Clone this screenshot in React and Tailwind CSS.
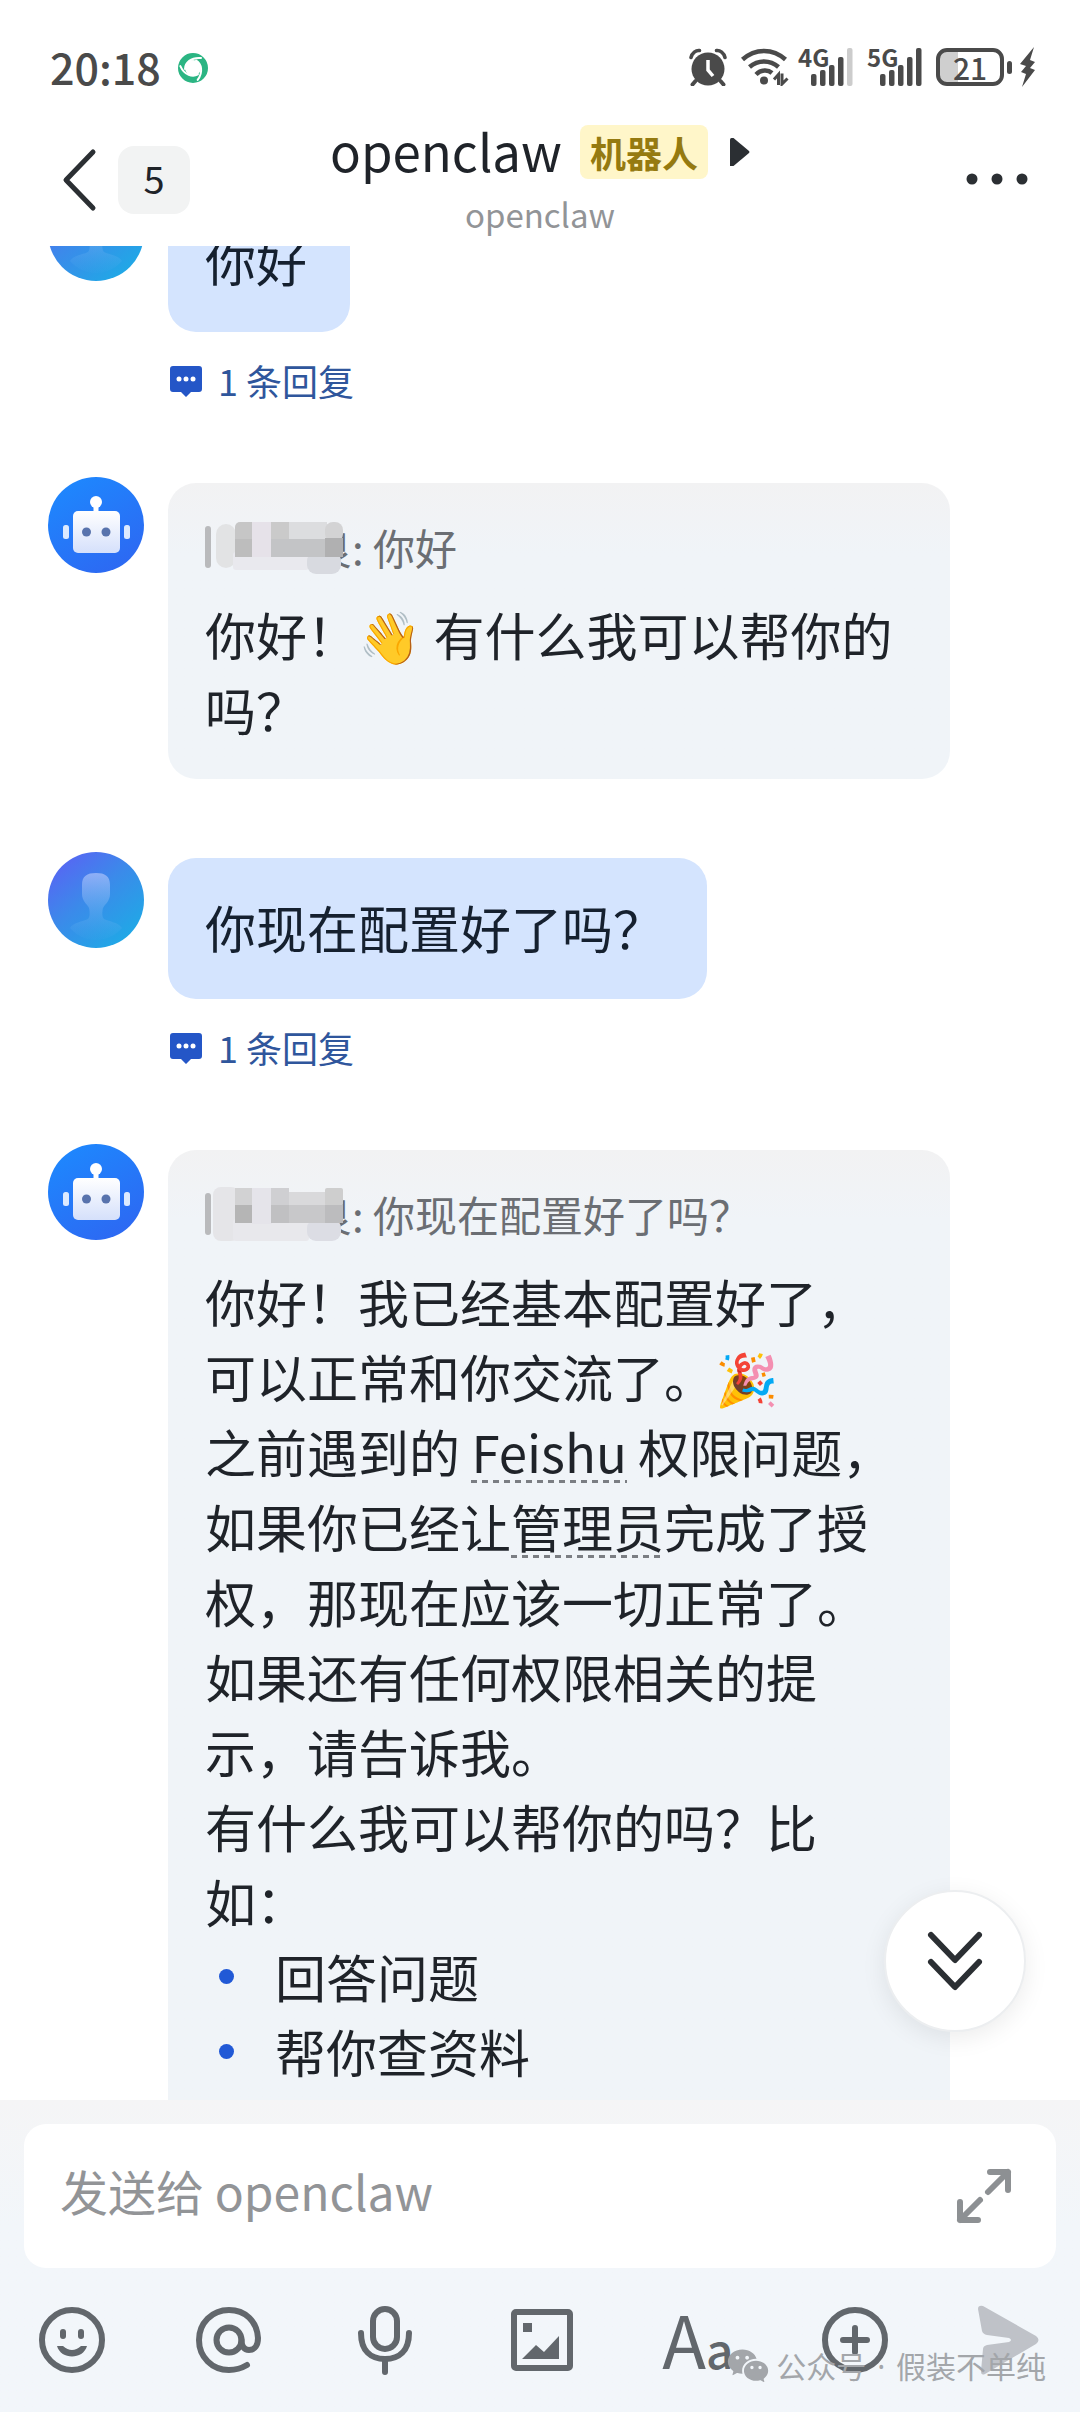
import { RiWechatFill } from "react-icons/ri";

function StatusBar() {
  return (
    <div className="flex h-[92px] items-end justify-between pr-[44px] pl-[50px] text-[#4a4a4a]">
      <div className="flex h-[50px] items-start gap-4">
        <time className="text-[43px] leading-[48px] font-medium">20:18</time>
        <svg viewBox="0 0 32 32" className="mt-[10px] size-8" fill="none" aria-hidden="true">
          <circle cx="16" cy="16" r="11.500" stroke="#2bb583" strokeWidth="7" />
          <g stroke="#fff" strokeWidth="2" strokeLinecap="round">
            <path id="cut" d="M8 17C8 11 14 5 24 6" />
            <path transform="rotate(120 16 16)" d="M8 17C8 11 14 5 24 6" />
            <path transform="rotate(240 16 16)" d="M8 17C8 11 14 5 24 6" />
          </g>
        </svg>
      </div>
      <div className="flex h-[50px] items-center">
        <svg viewBox="0 0 38 38" className="mr-[14px] size-[38px]" fill="none" aria-hidden="true">
          <circle cx="19" cy="21" r="16.500" fill="#4a4a4a" />
          <path d="M2 9.500C3 5 7 2 10.500 2.500M36 9.500C35 5 31 2 27.500 2.500" stroke="#4a4a4a" strokeWidth="3.500" strokeLinecap="round" />
          <path d="M6.500 33L3.500 36.500M31.500 33L34.500 36.500" stroke="#4a4a4a" strokeWidth="4" strokeLinecap="round" />
          <path d="M19 12V22L24 28" stroke="#fff" strokeWidth="3.500" />
        </svg>
        <svg viewBox="0 0 48 38" className="mr-[9px] h-[38px] w-12" fill="none" stroke="#4a4a4a" aria-hidden="true">
          <path d="M1.500 11.500C14 0 32 0 44.500 11.500" strokeWidth="4.500" />
          <path d="M8.500 19C17 11.500 29 11.500 37.500 19" strokeWidth="4.500" />
          <path d="M15 26.500C20 21.500 27 21.500 31 25" strokeWidth="4.500" />
          <circle cx="23" cy="32.500" r="4" fill="#4a4a4a" stroke="none" />
          <path d="M33 31.500L37.500 26.500V37M41 25.500V36L46.500 30.500" strokeWidth="3" />
        </svg>
        <Signal label="4G" full={false} />
        <Signal label="5G" full />
        <div className="flex h-[38px] w-[68px] items-center justify-center rounded-[11px] border-4 border-[#4a4a4a] bg-linear-to-r from-[#cfcfcf] from-30% to-white to-30% text-[30px] leading-[30px] font-medium">
          21
        </div>
        <span className="mr-2 ml-[3px] h-[13px] w-[5px] rounded-sm bg-[#4a4a4a]" />
        <svg viewBox="0 0 16 40" className="h-10 w-4" fill="#4a4a4a" aria-hidden="true">
          <path d="M14 0L0 17L6 19L1 25L6 27L2 40L15 23L10 21L15 15L10 13Z" />
        </svg>
      </div>
    </div>
  );
}

function Signal({ label, full }) {
  return (
    <div className="relative mr-[13px] h-[38px] w-14">
      <span className="absolute -top-px left-0 text-[24px] leading-[20px] font-bold">{label}</span>
      <svg viewBox="0 0 56 38" className="size-full" fill="#4a4a4a" aria-hidden="true">
        <rect x="13" y="26" width="5.500" height="12" rx="2" />
        <rect x="22" y="22" width="5.500" height="16" rx="2" />
        <rect x="31" y="17" width="5.500" height="21" rx="2" />
        <rect x="40" y="9" width="5.500" height="29" rx="2" />
        <rect x="49" y="0" width="5.500" height="38" rx="2" fill={full ? "#4a4a4a" : "#cccccc"} />
      </svg>
    </div>
  );
}

function Header() {
  return (
    <header className="grid h-[154px] grid-cols-[1fr_auto_1fr] items-start text-[#1f2329]">
      <div className="flex items-center pt-[54px] pl-[60px]">
        <button aria-label="返回" className="mr-[20px]">
          <svg viewBox="0 0 38 68" className="h-[68px] w-[38px]" fill="none" stroke="#2b2f33" strokeWidth="5" strokeLinecap="round" strokeLinejoin="round">
            <path d="M33 6L6 34L33 62" />
          </svg>
        </button>
        <span className="flex h-[68px] w-[72px] items-center justify-center rounded-2xl bg-[#f2f3f3] pb-1 text-[38px] leading-[64px]">5</span>
      </div>
      <div className="grid justify-items-center pt-6">
        <div className="flex h-[72px] items-center">
          <h1 className="pb-1 text-[51px] leading-[64px]">openclaw</h1>
          <span className="ml-[18px] rounded-lg bg-[#fff6c9] px-[10px] text-[36px] leading-[54px] font-bold text-[#957a10]">机器人</span>
          <svg viewBox="0 0 20 28" className="ml-[22px] h-7 w-5" fill="#2b2f33" aria-hidden="true">
            <path d="M0 1.500Q0 0 1.500 0H3.500L19 13Q20 14 19 15L3.500 28H0Z" />
          </svg>
        </div>
        <p className="pt-1 text-[33px] leading-[44px] text-[#929497]">openclaw</p>
      </div>
      <div className="flex justify-end pt-[76px] pr-[52px]">
        <button aria-label="更多">
          <svg viewBox="0 0 62 22" className="h-[22px] w-[62px]" fill="#2b2f33">
            <circle cx="6" cy="11" r="5.500" />
            <circle cx="31" cy="11" r="5.500" />
            <circle cx="56" cy="11" r="5.500" />
          </svg>
        </button>
      </div>
    </header>
  );
}

function UserAvatar() {
  return (
    <svg viewBox="0 0 96 96" className="size-24 shrink-0" role="img" aria-label="用户">
      <defs>
        <linearGradient id="userBg" x1="0.1" y1="0.1" x2="0.8" y2="0.95">
          <stop offset="0" stopColor="#5766f3" />
          <stop offset="0.450" stopColor="#3b8aea" />
          <stop offset="1" stopColor="#1fa9e6" />
        </linearGradient>
        <linearGradient id="userFg" x1="0" y1="0" x2="0" y2="1">
          <stop offset="0" stopColor="#a9c0fa" stopOpacity="0.750" />
          <stop offset="1" stopColor="#58b0ee" stopOpacity="0.050" />
        </linearGradient>
      </defs>
      <circle cx="48" cy="48" r="48" fill="url(#userBg)" />
      <path d="M48 21C57 21 62 24 62 33V42C62 49 57 52 55 56C54 60 54 65 56 67C62 70 70 70 74 76C67 84 58 88 48 88C38 88 29 84 22 76C26 70 34 70 40 67C42 65 42 60 41 56C39 52 34 49 34 42V33C34 24 39 21 48 21Z" fill="url(#userFg)" />
    </svg>
  );
}

function BotAvatar() {
  return (
    <svg viewBox="0 0 96 96" className="size-24 shrink-0" role="img" aria-label="openclaw">
      <defs>
        <linearGradient id="botBg" x1="0" y1="0" x2="0.6" y2="1">
          <stop offset="0" stopColor="#1c8bff" />
          <stop offset="1" stopColor="#2c6af3" />
        </linearGradient>
        <linearGradient id="botFg" x1="0" y1="0" x2="0" y2="1">
          <stop offset="0" stopColor="#ffffff" />
          <stop offset="1" stopColor="#d5e0fb" />
        </linearGradient>
      </defs>
      <circle cx="48" cy="48" r="48" fill="url(#botBg)" />
      <circle cx="48" cy="25" r="6" fill="#fff" />
      <rect x="45.500" y="26" width="5" height="10" fill="#fff" />
      <rect x="25" y="34" width="47" height="42" rx="5" fill="url(#botFg)" />
      <rect x="15" y="48" width="6" height="14" rx="2.500" fill="#dceaff" />
      <rect x="76" y="48" width="6" height="14" rx="2.500" fill="#dceaff" />
      <circle cx="38.500" cy="55" r="4.500" fill="#5873ad" />
      <circle cx="58" cy="55" r="4.500" fill="#5873ad" />
    </svg>
  );
}

const mosaicA = [
  [3, 6, 20, 44, "#e2e3e4", 10], [20, 34, 76, 18, "#e9e9ee", 3], [94, 34, 34, 22, "#d8dae0", 9],
  [22, 4, 30, 34, "#c6c6c6", 5], [39, 4, 20, 35, "#e6e2e9", 0], [58, 4, 18, 18, "#cacaca", 0],
  [76, 4, 38, 18, "#dcdddf", 0], [112, 4, 18, 20, "#d3d3d4", 8], [22, 21, 17, 18, "#bdbdbd", 0],
  [58, 21, 54, 18, "#c3c4c6", 0], [112, 20, 18, 19, "#b0b0b1", 0],
];
const mosaicB = [
  [0, 2, 26, 54, "#e5e5e8", 8], [20, 34, 76, 22, "#e8e8ec", 3], [94, 34, 34, 22, "#dcdde4", 9],
  [22, 3, 17, 18, "#d2d2d3", 0], [39, 3, 20, 36, "#e5e4ea", 0], [58, 3, 18, 18, "#cfcfd2", 0],
  [76, 7, 38, 15, "#d9d9db", 0], [112, 3, 18, 18, "#cecece", 2], [22, 20, 17, 18, "#b5b5b5", 0],
  [58, 20, 18, 18, "#c0c0c2", 0], [76, 20, 36, 18, "#c8c8ca", 0], [112, 20, 18, 18, "#bcbcbe", 0],
];

function Quote({ children, blocks }) {
  return (
    <blockquote className="relative flex h-16 items-center text-[42px] leading-[64px] text-[#6b6e73]">
      <span className="mr-[99px] h-[42px] w-[6px] rounded-sm bg-[#b9babc]" />
      <span>良: {children}</span>
      <svg viewBox="0 0 130 60" className="absolute top-[3px] left-2 h-[60px] w-[130px]" aria-hidden="true">
        {blocks.map(([x, y, w, h, fill, r], i) => (
          <rect key={i} x={x} y={y} width={w} height={h} rx={r} fill={fill} />
        ))}
      </svg>
    </blockquote>
  );
}

function UserMessage({ children }) {
  return (
    <article className="flex items-start gap-6 pl-12">
      <UserAvatar />
      <div className="pt-[6px]">
        <p className="w-fit rounded-[28px] bg-[#d4e4fe] pt-8 pb-[34px] pr-[43px] pl-[37px] text-[#15202f]">{children}</p>
        <button className="mt-6 flex h-12 items-center gap-[15px] pl-px text-[36px] leading-[48px] text-[#2f569c]">
          <svg viewBox="0 0 34 32" className="mt-1 h-8 w-[34px]" aria-hidden="true">
            <path d="M4 0H30Q33 0 33 3V23Q33 26 30 26H22L17 31L12 26H4Q1 26 1 23V3Q1 0 4 0Z" fill="#2456c7" />
            <g fill="#fff">
              <circle cx="10" cy="13" r="2.500" />
              <circle cx="17" cy="13" r="2.500" />
              <circle cx="24" cy="13" r="2.500" />
            </g>
          </svg>
          1 条回复
        </button>
      </div>
    </article>
  );
}

function BotMessage({ children }) {
  return (
    <article className="flex items-start gap-6 pr-[130px] pl-12">
      <BotAvatar />
      <div className="mt-[6px] flex-1 rounded-[28px] bg-linear-to-b from-[#f2f2f3] to-[#f0f4f8] to-[70px] pt-8 pr-[43px] pb-8 pl-[37px]">
        {children}
      </div>
    </article>
  );
}

function Term({ children }) {
  return (
    <a
      href="#term"
      className="bg-[repeating-linear-gradient(90deg,#7b7e83_0_6px,transparent_6px_11px)] bg-[length:100%_3px] bg-[position:0_66px] bg-no-repeat"
    >
      {children}
    </a>
  );
}

function Composer() {
  const tool = "flex h-[70px] w-[66px] items-center justify-center";
  return (
    <footer className="relative bg-linear-to-b from-[#f5f5f6] to-[#f2f6fa] to-40% px-6 pt-6 pb-[37px]">
      <div className="flex h-36 items-center rounded-[22px] bg-white pr-[42px] pl-9">
        <input
          aria-label="发送给 openclaw"
          placeholder="发送给 openclaw"
          className="h-[84px] min-w-0 flex-1 bg-transparent pb-3 text-[48px] outline-none placeholder:text-[#929497]"
        />
        <button aria-label="展开">
          <svg viewBox="0 0 60 60" className="size-[60px]" fill="none" stroke="#8d9093" strokeWidth="6" strokeLinecap="round" strokeLinejoin="round">
            <path d="M36 6H54V24M54 6L34 26M6 36V54H24M6 54L26 34" />
          </svg>
        </button>
      </div>
      <div className="mt-[37px] flex justify-between pr-3 pl-[15px] text-[#62676c]">
        <button aria-label="表情" className={tool}>
          <svg viewBox="0 0 66 68" className="h-[68px] w-[66px]" fill="none" stroke="currentColor" strokeWidth="6">
            <circle cx="33" cy="34" r="30" />
            <rect x="21" y="23" width="6" height="10" rx="3" fill="currentColor" stroke="none" />
            <rect x="39" y="23" width="6" height="10" rx="3" fill="currentColor" stroke="none" />
            <path d="M18 40H24Q33 48 42 40H48C44 54 22 54 18 40Z" fill="currentColor" stroke="none" />
          </svg>
        </button>
        <button aria-label="提及" className={tool}>
          <svg viewBox="0 0 66 68" className="h-[68px] w-[66px]" fill="none" stroke="currentColor" strokeWidth="6" strokeLinecap="round">
            <circle cx="33" cy="34" r="12.500" />
            <path d="M45.500 34C45.500 40 48 44 53 44C59 44 62 39 62 32C61 15 49 4 33 4C16 4 3 17 3 34C3 51 16 64 33 64C40 64 46 62 51 59" />
          </svg>
        </button>
        <button aria-label="语音" className={tool}>
          <svg viewBox="0 0 66 70" className="h-[70px] w-[66px]" fill="none" stroke="currentColor" strokeWidth="6" strokeLinecap="round">
            <rect x="21" y="4" width="24" height="40" rx="12" />
            <path d="M9 28C9 46 19 54 33 54C47 54 57 46 57 28M33 54V67" />
          </svg>
        </button>
        <button aria-label="图片" className={tool}>
          <svg viewBox="0 0 66 68" className="h-[68px] w-[66px]" fill="none" stroke="currentColor" strokeWidth="6">
            <rect x="5" y="6" width="56" height="56" rx="2" />
            <rect x="14" y="17" width="9" height="9" fill="currentColor" stroke="none" />
            <path d="M13 53L27 39L35 46L50 30V53Z" fill="currentColor" stroke="none" />
          </svg>
        </button>
        <button aria-label="文字格式" className="flex h-[70px] w-[66px] items-baseline justify-center leading-[66px]">
          <span className="text-[72px]">A</span>
          <span className="text-[48px] font-medium">a</span>
        </button>
        <button aria-label="更多功能" className={tool}>
          <svg viewBox="0 0 66 68" className="h-[68px] w-[66px]" fill="none" stroke="currentColor" strokeWidth="6" strokeLinecap="round">
            <circle cx="33" cy="34" r="30" />
            <path d="M33 22V46M21 34H45" />
          </svg>
        </button>
        <button aria-label="发送" className="flex h-[70px] w-[66px] items-center">
          <svg viewBox="3 0 63 70" className="h-[70px] w-[63px]" fill="#bfc2c8">
            <path d="M3 4Q3 0 8 1L61 31Q66 35 61 39L10 69Q6 71 6 66L8 44Q8 41 12 40L34 37Q38 35 34 33L12 30Q8 29 7 26Z" />
          </svg>
        </button>
      </div>
      <div className="pointer-events-none absolute right-[34px] bottom-[23px] flex items-center gap-[6px] text-[30px] leading-[44px] text-[#a3a6aa]">
        <RiWechatFill className="size-[44px]" aria-hidden="true" />
        <span>
          公众号<span className="px-[3px] font-['Noto_Sans']"> · </span>假装不单纯
        </span>
      </div>
    </footer>
  );
}

export default function App() {
  return (
    <div className="flex h-screen flex-col overflow-hidden bg-white font-['Noto_Sans_CJK_SC',sans-serif] text-[51px] leading-[75px] text-[#1f2329]">
      <StatusBar />
      <Header />
      <div className="relative min-h-0 flex-1">
        <main className="h-full overflow-hidden">
          <div className="-mt-[61px] flex flex-col gap-[73px]">
            <UserMessage>你好</UserMessage>
            <BotMessage>
              <Quote blocks={mosaicA}>你好</Quote>
              <p className="mt-[18px]">你好！👋 有什么我可以帮你的吗？</p>
            </BotMessage>
            <UserMessage>你现在配置好了吗？</UserMessage>
            <BotMessage>
              <Quote blocks={mosaicB}>你现在配置好了吗？</Quote>
              <p className="mt-[18px]">你好！我已经基本配置好了，可以正常和你交流了。🎉</p>
              <p>
                之前遇到的 <Term>Feishu</Term> 权限问题，如果你已经让<Term>管理员</Term>完成了授权，那现在应该一切正常了。
              </p>
              <p>如果还有任何权限相关的提示，请告诉我。</p>
              <p>有什么我可以帮你的吗？比如：</p>
              <ul className="pb-16">
                {["回答问题", "帮你查资料"].map((item) => (
                  <li key={item} className="flex items-center">
                    <span className="mr-[41px] ml-[14px] size-[15px] rounded-full bg-[#2159d6]" />
                    {item}
                  </li>
                ))}
              </ul>
            </BotMessage>
          </div>
        </main>
        <button
          aria-label="回到底部"
          className="absolute right-[54px] bottom-[68px] flex size-[142px] items-center justify-center rounded-full border-2 border-[#eceef0] bg-white shadow-[0_6px_24px_rgba(0,0,0,0.080)]"
        >
          <svg viewBox="0 0 60 64" className="h-16 w-[60px]" fill="none" stroke="#2b2f33" strokeWidth="6" strokeLinecap="round" strokeLinejoin="round">
            <path d="M6 6L30 31L54 6M6 33L30 58L54 33" />
          </svg>
        </button>
      </div>
      <Composer />
    </div>
  );
}
